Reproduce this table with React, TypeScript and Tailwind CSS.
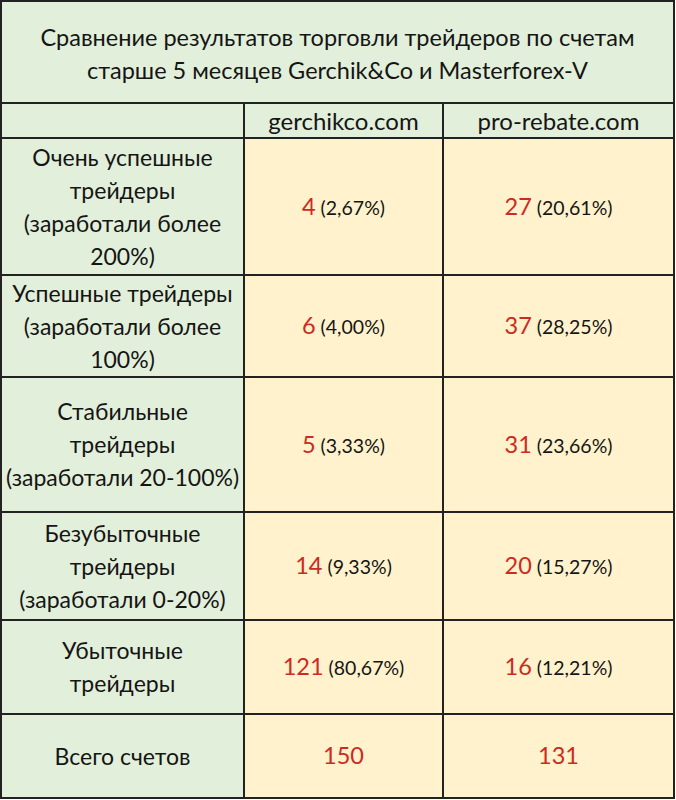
const rows = [
  {
    label: ["Очень успешные", "трейдеры", "(заработали более", "200%)"],
    a: ["4", "2,67%"],
    b: ["27", "20,61%"],
    h: "h-[135px]",
  },
  {
    label: ["Успешные трейдеры", "(заработали более", "100%)"],
    a: ["6", "4,00%"],
    b: ["37", "28,25%"],
    h: "h-[100px]",
  },
  {
    label: ["Стабильные", "трейдеры", "(заработали 20-100%)"],
    a: ["5", "3,33%"],
    b: ["31", "23,66%"],
    h: "h-[133px]",
  },
  {
    label: ["Безубыточные", "трейдеры", "(заработали 0-20%)"],
    a: ["14", "9,33%"],
    b: ["20", "15,27%"],
    h: "h-[106px]",
  },
  {
    label: ["Убыточные", "трейдеры"],
    a: ["121", "80,67%"],
    b: ["16", "12,21%"],
    h: "h-[92px]",
  },
];

function Value({ v }: { v: string[] }) {
  return (
    <div className="flex items-baseline justify-center gap-[5px]">
      <span className="text-[23.5px] text-[#cc2a22]">{v[0]}</span>
      <span className="text-[19.5px] text-[#151515]">({v[1]})</span>
    </div>
  );
}

export default function App() {
  return (
    <div
      className="w-[676px] h-[800px] bg-white"
      style={{ fontFamily: '"Lato", "Liberation Sans", sans-serif' }}
    >
      <div className="grid w-[675px] grid-cols-[241px_197px_229px] gap-[2px] bg-[#222] p-[2px] text-[#151515]">
        <div className="col-span-3 flex h-[100px] flex-col items-center justify-center bg-[#e2efda] pt-[3px] text-[23.5px] leading-[33px]">
          <div>Сравнение результатов торговли трейдеров по счетам</div>
          <div>старше 5 месяцев Gerchik&amp;Co и Masterforex-V</div>
        </div>

        <div className="h-[33px] bg-[#e2efda]" />
        <div className="flex h-[33px] items-center justify-center bg-[#e2efda] text-[24px]">
          gerchikco.com
        </div>
        <div className="flex h-[33px] items-center justify-center bg-[#e2efda] text-[24px]">
          pro-rebate.com
        </div>

        {rows.map((r, i) => (
          <div key={i} className="contents">
            <div
              className={`flex ${r.h} flex-col items-center justify-center bg-[#e2efda] text-center text-[23px] leading-[33px]`}
            >
              {r.label.map((l, j) => (
                <div key={j}>{l}</div>
              ))}
            </div>
            <div className={`flex ${r.h} items-center justify-center bg-[#fff2cc]`}>
              <Value v={r.a} />
            </div>
            <div className={`flex ${r.h} items-center justify-center bg-[#fff2cc]`}>
              <Value v={r.b} />
            </div>
          </div>
        ))}

        <div className="flex h-[82px] items-center justify-center bg-[#e2efda] text-[23px]">
          Всего счетов
        </div>
        <div className="flex h-[82px] items-center justify-center bg-[#fff2cc] text-[23.5px] text-[#cc2a22]">
          150
        </div>
        <div className="flex h-[82px] items-center justify-center bg-[#fff2cc] text-[23.5px] text-[#cc2a22]">
          131
        </div>
      </div>
    </div>
  );
}
